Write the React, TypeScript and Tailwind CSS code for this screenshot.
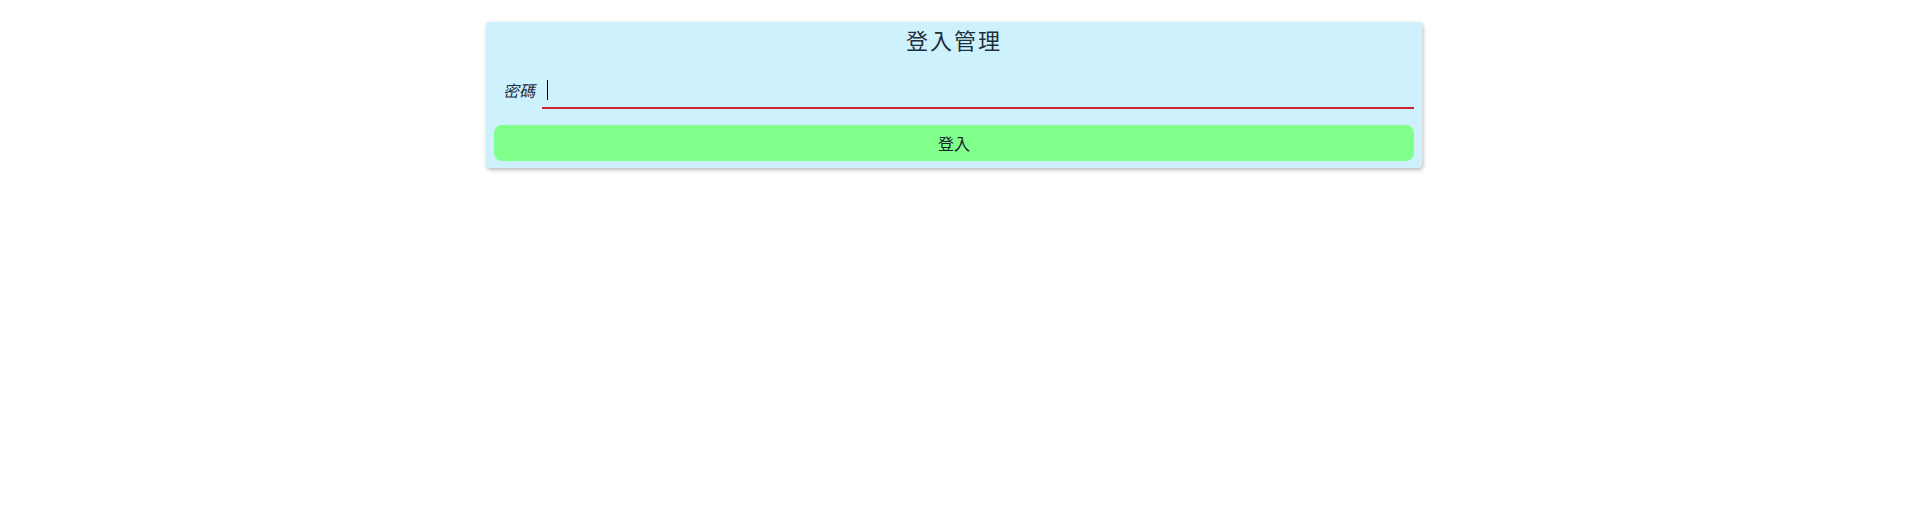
export default function App() {
  return (
    <div className="min-h-screen bg-white font-['Noto_Sans_CJK_TC','Noto_Sans',sans-serif] text-[#1f2d3d]">
      <div className="pt-[22px]">
        <div className="ml-[486px] w-[936px] rounded-[4px] bg-[#cdf2fd] px-[8px] pt-[1px] pb-[7px] shadow-[1px_2px_4px_rgba(0,0,0,0.28)]">
          <h1 className="text-center text-[22px] leading-[32px] tracking-[2px]">
            登入管理
          </h1>
          <div className="mt-[17px] flex items-end">
            <label className="w-[48px] pb-[8px] pl-[9px] text-[16px] italic leading-[22px]">
              密碼
            </label>
            <div className="relative flex-1">
              <input
                type="password"
                className="block h-[37px] w-full border-b-2 border-[#d0202f] bg-transparent px-[5px] outline-none"
              />
              <span className="absolute left-[5px] top-[8px] h-[20px] w-px bg-black" />
            </div>
          </div>
          <button className="mt-[16px] block h-[36px] w-full rounded-[8px] bg-[#80ff8a] text-[16px] leading-[32px] text-[#16202a]">
            登入
          </button>
        </div>
      </div>
    </div>
  );
}
